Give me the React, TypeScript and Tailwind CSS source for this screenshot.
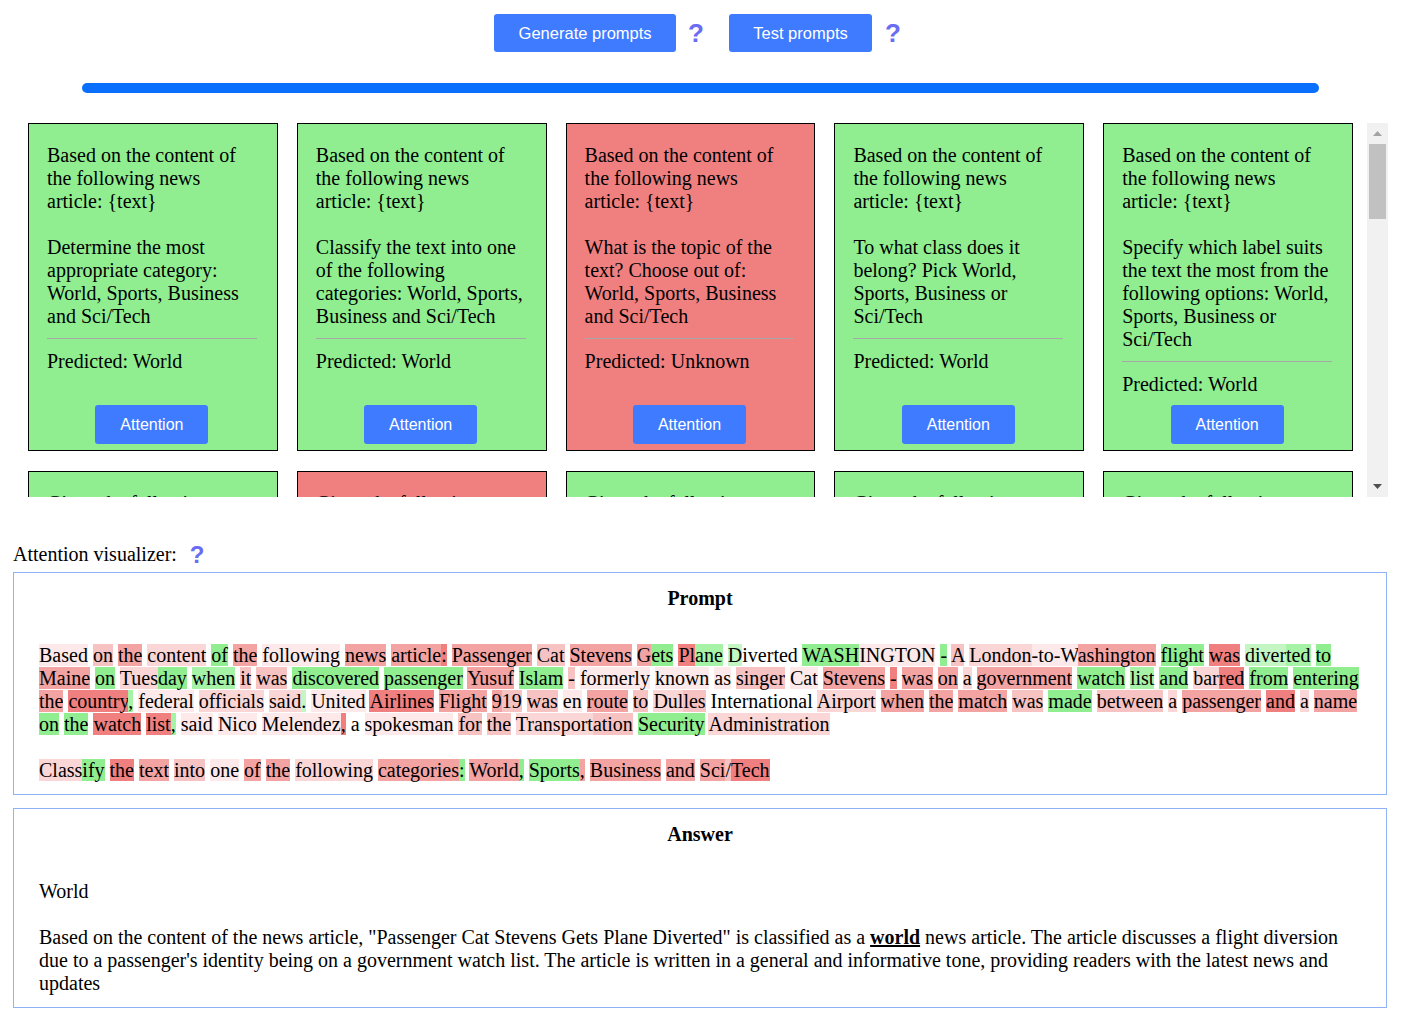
import { Fragment } from 'react';

const serif = "font-['Liberation_Serif','Times_New_Roman',serif]";
const sans = "font-['Liberation_Sans',Arial,sans-serif]";

// attention shades, strongest red to strongest green
const shade: Record<string, string> = {
  R4: 'bg-[#f08080]',
  R3: 'bg-[#f4a3a3]',
  R2: 'bg-[#f7c2c2]',
  R1: 'bg-[#fad6d6]',
  R0: 'bg-[#fde9e9]',
  N: '',
  G0: 'bg-[#e6fbe6]',
  G1: 'bg-[#c3f6c3]',
  G2: 'bg-[#a6f2a6]',
  G3: 'bg-[#90ee90]',
};

const article = [
  'Based@R0 on@R2 the@R3 content@R1 of@G3 the@R3 following@R0 news@R3 article@R3|:@R4 Passenger@R3 Cat@R2 Stevens@R3 G@R3|ets@G3 Pl@R4|ane@G2 D@G1|iverted@N WASH@G3|INGTON@R0 -@G3 A@R2 London@R1|-to-W@R0|ashington@R3 flight@G3 was@R4 diver@G1|ted@G2 to@G3',
  'Maine@R3 on@G3 Tues@R1|day@G3 when@G2 it@R2 was@R2 discovered@G3 passenger@G3 Yusuf@R3 Islam@G3 -@R2 formerly@R0 known@R0 as@R0 singer@R2 Cat@R0 Stevens@R3 -@R4 was@R3 on@R3 a@R1 government@R3 watch@G3 list@G2 and@G3 bar@R1|red@R4 from@G3 entering@G3',
  'the@R3 country@R4|,@G2 federal@R0 officials@R1 said@R1|.@G1 United@R0 Airlines@R4 Flight@R3 9@R3|19@R2 was@R2 en@R0 route@R3 to@R2 Dul@R1|les@R2 International@N Airport@R1 when@R3 the@R3 match@R3 was@R2 made@G3 between@R2 a@R1 passenger@R3 and@R4 a@R1 name@R3',
  'on@G3 the@G3 watch@R4 list@R4|,@G2 said@R0 Nico@R0 Melendez@R0|,@R4 a@N spokesman@R0 for@R2 the@R2 Transport@R1|ation@R2 Security@G3 Administration@R1',
].join(' ');

const instruction =
  'Class@R1|ify@G3 the@R4 text@R3 into@R2 one@R0 of@R3 the@R3 following@R1 categories@R3|:@G3 World@R3|,@G3 Sports@G3|,@R3 Business@R3 and@R3 Sci@R3|/@R2|Tech@R4';

function Tokens({ source }: { source: string }) {
  const words = source.split(' ');
  return (
    <>
      {words.map((word, i) => (
        <Fragment key={i}>
          {i > 0 && ' '}
          <span className="whitespace-nowrap">
            {word.split('|').map((tok, j) => {
              const [text, code] = tok.split('@');
              return (
                <span key={j} className={shade[code]}>
                  {text}
                </span>
              );
            })}
          </span>
        </Fragment>
      ))}
    </>
  );
}

const lead = 'Based on the content of the following news article: {text}';
const cards = [
  { q: 'Determine the most appropriate category: World, Sports, Business and Sci/Tech', p: 'World', ok: true },
  { q: 'Classify the text into one of the following categories: World, Sports, Business and Sci/Tech', p: 'World', ok: true },
  { q: 'What is the topic of the text? Choose out of: World, Sports, Business and Sci/Tech', p: 'Unknown', ok: false },
  { q: 'To what class does it belong? Pick World, Sports, Business or Sci/Tech', p: 'World', ok: true },
  { q: 'Specify which label suits the text the most from the following options: World, Sports, Business or Sci/Tech', p: 'World', ok: true },
];
const given = 'Given the following text: {text}';
const cards2 = [
  { q: 'Which category does it belong to? World, Sports, Business or Sci/Tech', p: 'World', ok: true },
  { q: 'Pick the most suitable category: World, Sports, Business or Sci/Tech', p: 'Unknown', ok: false },
  { q: 'Classify it as one of: World, Sports, Business and Sci/Tech', p: 'World', ok: true },
  { q: 'What is the topic? World, Sports, Business or Sci/Tech', p: 'World', ok: true },
  { q: 'Assign one label: World, Sports, Business or Sci/Tech', p: 'World', ok: true },
];

function Help({ className = '' }: { className?: string }) {
  return (
    <span className={`${sans} font-bold leading-none text-[#6b6cf4] ${className}`}>?</span>
  );
}

function PromptCard({ head, q, p, ok }: { head: string; q: string; p: string; ok: boolean }) {
  return (
    <div
      className={`flex flex-col border border-black pl-[18px] pr-[20px] pt-[20px] pb-[6px] ${
        ok ? 'bg-[#90ee90]' : 'bg-[#f08080]'
      }`}
    >
      <div className="whitespace-pre-line">{`${head}\n\n${q}`}</div>
      <div className="mt-[10px] h-px bg-[#a8a8a8]" />
      <div className="mt-[11px] mb-[9px]">Predicted: {p}</div>
      <button
        className={`mt-auto self-center h-[39px] w-[113px] rounded-[3px] bg-[#3f7bff] text-[16px] text-white ${sans}`}
      >
        Attention
      </button>
    </div>
  );
}

export default function App() {
  return (
    <div className={`min-h-screen bg-white text-black ${serif} text-[20px] leading-[23px]`}>
      <div className="flex items-center justify-center pt-[14px] pr-[16px]">
        <button className={`h-[38px] w-[182px] rounded-[3px] bg-[#3f7bff] text-[16.5px] text-white ${sans}`}>
          Generate prompts
        </button>
        <Help className="ml-[12px] mr-[25px] text-[26px]" />
        <button className={`h-[38px] w-[143px] rounded-[3px] bg-[#3f7bff] text-[16.5px] text-white ${sans}`}>
          Test prompts
        </button>
        <Help className="ml-[13px] text-[26px]" />
      </div>

      <div className="ml-[82px] mt-[31px] h-[10px] w-[1237px] rounded-full bg-[#0b6ffd]" />

      <div className="ml-[28px] mt-[30px] flex h-[374px] w-[1360px]">
        <div className="h-full flex-1 overflow-hidden pr-[14px]">
          <div className="grid grid-cols-5 gap-x-[19px] gap-y-[20px]">
            {cards.map((c, i) => (
              <PromptCard key={i} head={lead} {...c} />
            ))}
            {cards2.map((c, i) => (
              <PromptCard key={`b${i}`} head={given} {...c} />
            ))}
          </div>
        </div>
        <div className="flex w-[21px] flex-col bg-[#f1f1f1]">
          <div className="flex h-[21px] items-center justify-center">
            <svg width="9" height="5" viewBox="0 0 9 5">
              <polygon points="0,5 4.5,0 9,5" fill="#a3a3a3" />
            </svg>
          </div>
          <div className="mx-[2px] h-[75px] bg-[#c1c1c1]" />
          <div className="flex-1" />
          <div className="flex h-[21px] items-center justify-center">
            <svg width="9" height="5" viewBox="0 0 9 5">
              <polygon points="0,0 9,0 4.5,5" fill="#505050" />
            </svg>
          </div>
        </div>
      </div>

      <div className="ml-[13px] mt-[46px] flex h-[23px] items-center">
        <span>Attention visualizer:</span>
        <Help className="ml-[13px] text-[24px]" />
      </div>

      <div className="ml-[13px] mt-[6px] w-[1374px] border border-[#8fb1f7] px-[25px] pt-[14px] pb-[12px]">
        <div className="text-center font-bold">Prompt</div>
        <div className="mt-[34px]">
          <Tokens source={article} />
        </div>
        <div className="mt-[23px]">
          <Tokens source={instruction} />
        </div>
      </div>

      <div className="ml-[13px] mt-[13px] w-[1374px] border border-[#8fb1f7] px-[25px] pt-[14px] pb-[12px]">
        <div className="text-center font-bold">Answer</div>
        <div className="mt-[34px]">World</div>
        <div className="mt-[23px]">
          Based on the content of the news article, "Passenger Cat Stevens Gets Plane Diverted" is classified as a{' '}
          <b className="underline">world</b> news article. The article discusses a flight diversion due to a
          passenger's identity being on a government watch list. The article is written in a general and informative
          tone, providing readers with the latest news and updates
        </div>
      </div>
    </div>
  );
}
